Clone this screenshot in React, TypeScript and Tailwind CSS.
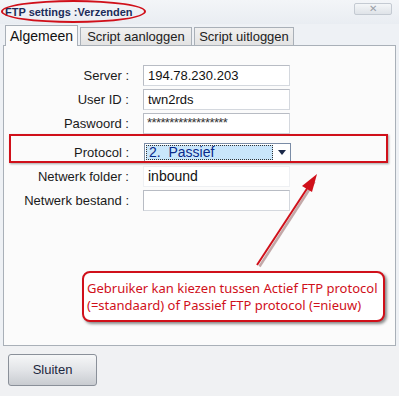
import React from "react";

const Row = ({ label, children, mt }: { label: string; children: React.ReactNode; mt: string }) => (
  <div className={`flex items-center ${mt}`}>
    <div className="w-[128px] shrink-0 pr-[3px] text-right text-[13px] leading-none text-[#1a1a1a]">{label}</div>
    <div className="ml-[11px]">{children}</div>
  </div>
);

const Input = ({ value }: { value?: string }) => (
  <div className="flex h-[21px] w-[147px] items-center border border-[#d4d8de] border-l-[#b8bcc4] border-t-[#b8bcc4] bg-white pl-[4px] text-[13px] text-[#111]">
    {value}
  </div>
);

export default function App() {
  return (
    <div
      className="relative flex h-[396px] w-[399px] flex-col overflow-hidden bg-[#eef1f5]"
      style={{ fontFamily: '"Liberation Sans", Arial, sans-serif' }}
    >
      {/* title bar */}
      <div className="flex h-[24px] shrink-0 items-center justify-between bg-gradient-to-b from-[#f3f5f8] to-[#e9edf2] pl-[5px] pr-[7px]">
        <span className="text-[11px] font-bold text-[#1b2c5a]">FTP settings :Verzenden</span>
        <span className="mt-[-6px] flex h-[12px] w-[38px] items-center justify-center rounded-[2px] border border-[#c4cad2] bg-gradient-to-b from-[#f4f6f8] to-[#dfe3e8] text-[10px] leading-none text-[#9aa0a8]">
          ✕
        </span>
      </div>

      {/* tabs */}
      <div className="flex h-[21px] shrink-0 items-end pl-[5px]">
        <div className="relative z-10 mb-[-1px] flex h-[21px] w-[73px] items-center justify-center border border-b-0 border-[#a9b0b8] bg-[#fbfbfb] text-[14px] text-[#111]">
          Algemeen
        </div>
        <div className="ml-[2px] flex h-[18px] w-[112px] items-center justify-center border border-b-0 border-[#a9b0b8] bg-gradient-to-b from-[#f0f0f0] to-[#e3e3e3] text-[13px] text-[#222]">
          Script aanloggen
        </div>
        <div className="ml-[2px] flex h-[18px] w-[100px] items-center justify-center border border-b-0 border-[#a9b0b8] bg-gradient-to-b from-[#f0f0f0] to-[#e3e3e3] text-[13px] text-[#222]">
          Script uitloggen
        </div>
      </div>

      {/* panel */}
      <div className="mx-[3px] flex h-[301px] shrink-0 flex-col border border-[#a9b0b8] bg-[#fbfbfb] pt-[19px] pl-[0px]">
        <Row label="Server :" mt="mt-0">
          <Input value="194.78.230.203" />
        </Row>
        <Row label="User ID :" mt="mt-[3px]">
          <Input value="twn2rds" />
        </Row>
        <Row label="Paswoord :" mt="mt-[3px]">
          <div className="flex h-[21px] w-[147px] items-start overflow-hidden border border-[#d4d8de] border-l-[#b8bcc4] border-t-[#b8bcc4] bg-white pl-[3px] pt-[2px] text-[13px] leading-[13px] tracking-[-0.6px] text-[#333]">
            ******************
          </div>
        </Row>
        <Row label="Protocol :" mt="mt-[9px]">
          <div className="ml-[1px] flex h-[19px] w-[147px] items-center border border-[#7a8ca6] bg-white">
            <div className="ml-[1px] flex h-[15px] w-[127px] items-center border border-dotted border-[#333] bg-[#c9e6fb] pl-[2px] text-[14px] text-[#0a2a8a]">
              2.&nbsp; Passief
            </div>
            <div className="flex flex-1 items-center justify-center">
              <svg width="8" height="5" viewBox="0 0 8 5">
                <path d="M0 0 H8 L4 5 Z" fill="#1c2a4a" />
              </svg>
            </div>
          </div>
        </Row>
        <Row label="Netwerk folder :" mt="mt-[4px]">
          <div className="flex h-[21px] w-[147px] items-center border border-[#eef0f3] bg-white pl-[4px] text-[14px] text-[#111]">
            inbound
          </div>
        </Row>
        <Row label="Netwerk bestand :" mt="mt-[3px]">
          <Input />
        </Row>
      </div>

      {/* bottom */}
      <div className="flex flex-1 items-start bg-[#f0f1f3] pl-[8px] pt-[8px]">
        <button className="flex h-[32px] w-[89px] items-center justify-center rounded-[3px] border border-[#8a9099] bg-gradient-to-b from-[#f6f7f8] via-[#e2e4e7] to-[#c9ccd1] text-[13px] text-[#1d2840]">
          Sluiten
        </button>
      </div>

      {/* annotations */}
      <div className="pointer-events-none absolute left-[1px] top-[0px] h-[23px] w-[145px] rounded-[50%] border-2 border-[#d0101a]" />
      <div className="pointer-events-none absolute left-[9px] top-[134px] h-[29px] w-[379px] border-2 border-[#d0101a] shadow-[1px_1px_2px_rgba(0,0,0,0.35)]" />
      <svg className="pointer-events-none absolute left-0 top-0" width="399" height="396">
        <line x1="258" y1="265" x2="313" y2="180" stroke="#5a1010" strokeWidth="2.5" opacity="0.35" transform="translate(1.5,1.5)" />
        <line x1="257" y1="265" x2="312" y2="181" stroke="#d0101a" strokeWidth="2" />
        <path d="M317 174 L302 186 L312 192 Z" fill="#d0101a" />
      </svg>
      <div className="pointer-events-none absolute left-[82px] top-[271px] flex h-[51px] w-[303px] flex-col justify-center rounded-[8px] border-2 border-[#d0101a] bg-white pl-[3px] text-[13px] leading-[17px] text-[#d0101a] shadow-[2px_2px_3px_rgba(0,0,0,0.45)]" style={{ fontFamily: '"Noto Sans", sans-serif' }}>
        <div className="whitespace-nowrap">Gebruiker kan kiezen tussen Actief FTP protocol</div>
        <div className="whitespace-nowrap">(=standaard) of Passief FTP protocol (=nieuw)</div>
      </div>
    </div>
  );
}
